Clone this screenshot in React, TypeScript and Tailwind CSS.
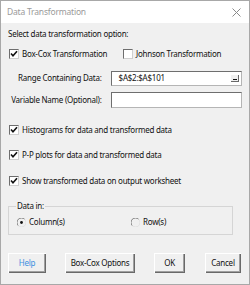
import React from "react";

const font = { fontFamily: '"Noto Sans", "Open Sans", sans-serif' };

function Check({ checked }: { checked: boolean }) {
  return (
    <span className="w-[10px] h-[10px] bg-white border border-t-[#6e6e6e] border-l-[#6e6e6e] border-b-[#cfcfcf] border-r-[#cfcfcf] flex items-center justify-center shrink-0">
      {checked && (
        <svg width="8" height="8" viewBox="0 0 8 8">
          <path d="M1 3.5 L3 5.8 L7 1.2" stroke="#111" strokeWidth="1.6" fill="none" />
        </svg>
      )}
    </span>
  );
}

function Radio({ checked }: { checked: boolean }) {
  return (
    <svg width="9" height="9" viewBox="0 0 9 9" className="shrink-0">
      <path d="M1.3 7.7 A4 4 0 0 1 7.7 1.3" stroke="#7a7a7a" strokeWidth="1" fill="none" />
      <path d="M7.7 1.3 A4 4 0 0 1 1.3 7.7" stroke="#e0e0e0" strokeWidth="1" fill="none" />
      {checked && <circle cx="4.5" cy="4.5" r="1.4" fill="#111" />}
    </svg>
  );
}

function Btn({ children, blue, w }: { children: React.ReactNode; blue?: boolean; w: string }) {
  return (
    <div
      className={`${w} h-[20px] bg-[#f0f0f0] flex items-center justify-center whitespace-nowrap text-[8px] tracking-[-0.25px] shadow-[inset_1px_1px_0_#ffffff,inset_-1px_-1px_0_#696969,inset_-2px_-2px_0_#a0a0a0] ${
        blue ? "text-[#3b8fe0]" : "text-[#111]"
      }`}
    >
      {children}
    </div>
  );
}

export default function App() {
  return (
    <div className="w-[250px] h-[285px] border border-[#a8a8a8] flex flex-col bg-[#f0f0f0] whitespace-nowrap" style={font}>
      <div className="h-[22px] bg-white flex items-center justify-between pl-[6px] pr-[8px] shrink-0">
        <span className="text-[8.5px] tracking-[-0.2px] text-[#9a9a9a]">Data Transformation</span>
        <svg width="9" height="9" viewBox="0 0 9 9">
          <path d="M0.5 0.5 L8.5 8.5 M8.5 0.5 L0.5 8.5" stroke="#8a8a8a" strokeWidth="1" />
        </svg>
      </div>
      <div className="flex-1 flex flex-col px-[7px] text-[8px] tracking-[-0.25px] text-[#111]">
        <div className="h-[12px] mt-[5px] flex items-center">Select data transformation option:</div>
        <div className="h-[12px] mt-[8px] flex items-center">
          <div className="flex items-center gap-[3px] w-[115px] pl-[1px]">
            <Check checked />
            <span>Box-Cox Transformation</span>
          </div>
          <div className="flex items-center gap-[3px]">
            <Check checked={false} />
            <span>Johnson Transformation</span>
          </div>
        </div>
        <div className="h-[14px] mt-[11px] flex items-center">
          <span className="w-[94px] text-right">Range Containing Data:</span>
          <div className="ml-[9px] w-[132px] h-[15px] bg-white border border-t-[#6e6e6e] border-l-[#6e6e6e] border-b-[#b5b5b5] border-r-[#b5b5b5] flex items-center justify-between pl-[7px] pr-[2px]">
            <span>$A$2:$A$101</span>
            <div className="w-[9px] h-[8px] bg-[#f0f0f0] shadow-[inset_1px_1px_0_#ffffff,inset_-1px_-1px_0_#696969] flex items-end justify-center pb-[2px]">
              <div className="w-[4px] h-[1px] bg-[#111]" />
            </div>
          </div>
        </div>
        <div className="h-[16px] mt-[7px] flex items-center">
          <span className="w-[94px] text-right">Variable Name (Optional):</span>
          <div className="ml-[9px] w-[132px] h-[16px] bg-white border border-t-[#6e6e6e] border-l-[#6e6e6e] border-b-[#b5b5b5] border-r-[#b5b5b5]" />
        </div>
        <div className="h-[12px] mt-[16px] flex items-center gap-[3px] pl-[1px]">
          <Check checked />
          <span>Histograms for data and transformed data</span>
        </div>
        <div className="h-[12px] mt-[13px] flex items-center gap-[3px] pl-[1px]">
          <Check checked />
          <span>P-P plots for data and transformed data</span>
        </div>
        <div className="h-[12px] mt-[14px] flex items-center gap-[3px] pl-[1px]">
          <Check checked />
          <span>Show transformed data on output worksheet</span>
        </div>
        <fieldset className="mt-[13px] w-[225px] h-[35px] border border-[#d5d5d5] px-[7px]">
          <legend className="px-[1px] leading-[12px]">Data in:</legend>
          <div className="flex items-center h-[12px] mt-[4px] pl-[1px]">
            <div className="flex items-center gap-[3px] w-[114px]">
              <Radio checked />
              <span>Column(s)</span>
            </div>
            <div className="flex items-center gap-[3px]">
              <Radio checked={false} />
              <span>Row(s)</span>
            </div>
          </div>
        </fieldset>
        <div className="mt-[18px] flex items-center">
          <Btn blue w="w-[38px]">Help</Btn>
          <div className="ml-[19px]">
            <Btn w="w-[70px]">Box-Cox Options</Btn>
          </div>
          <div className="ml-[19px]">
            <Btn w="w-[31px]">OK</Btn>
          </div>
          <div className="ml-[20px]">
            <Btn w="w-[36px]">Cancel</Btn>
          </div>
        </div>
      </div>
    </div>
  );
}
